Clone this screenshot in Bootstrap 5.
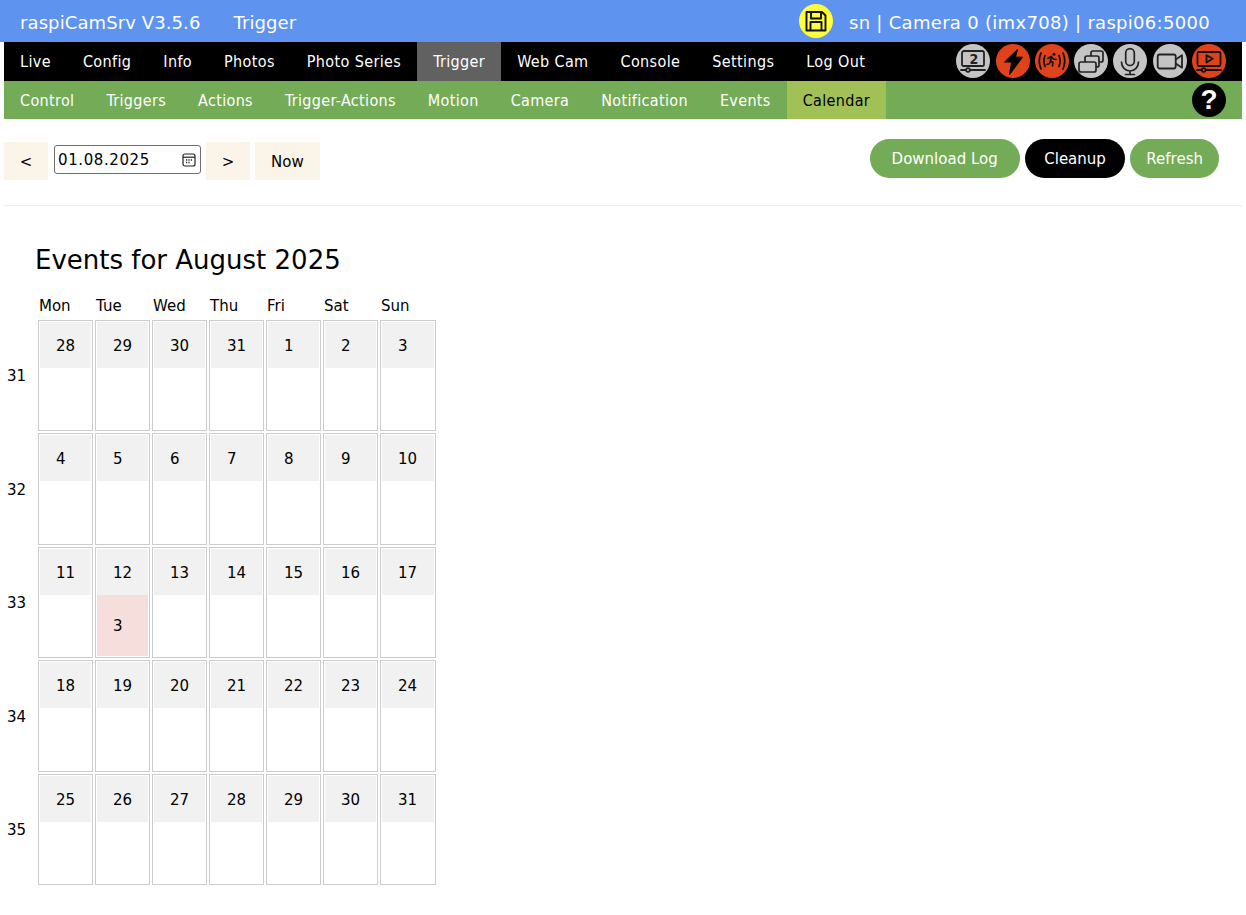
<!DOCTYPE html>
<html lang="en">
<head>
<meta charset="utf-8">
<title>raspiCamSrv</title>
<link href="https://cdn.jsdelivr.net/npm/bootstrap@5.3.0/dist/css/bootstrap.min.css" rel="stylesheet">
<style>
body{font-family:"DejaVu Sans",Verdana,sans-serif;font-size:15px;color:#000;background:#fff;line-height:1.5;}
.site-head{height:42px;background:#5e94ef;color:#fff;padding:2px 36px 0 20px;font-size:18px;letter-spacing:.1px;}
.site-head .page-name{margin-left:33px;}
.site-head .cam-info{letter-spacing:.3px;}
.round-ico{width:34px;height:34px;border-radius:50%;flex:none;display:block;}
.ico-save{background:#ffff3b;margin:-2px 16px 0 0;}
.ico-grey{background:#c4c4c4;}
.ico-red{background:#e0431c;}
.main-menu,.sub-menu{margin:0 4px;font-family:"DejaVu Sans Condensed","DejaVu Sans",sans-serif;font-stretch:condensed;}
.main-menu{background:#000;height:39px;padding-right:16px;}
.sub-menu{background:#74ab57;height:38px;padding-right:16px;}
.menu-item{display:block;padding:0 16px;color:#fff;text-decoration:none;height:100%;line-height:40px;font-size:16px;letter-spacing:.37px;}
.sub-menu .menu-item{letter-spacing:.34px;}
.main-menu .menu-item.on{background:#616161;}
.sub-menu .menu-item.on{background:#a1c055;color:#000;}
.ico-row{gap:5px;align-self:flex-start;margin-top:2px;}
.ico-row .round-ico:nth-child(1),.ico-row .round-ico:nth-child(5){margin-right:1px;}
.ico-help{background:#000;color:#fff;font:700 28px/34px "Liberation Sans",sans-serif;text-align:center;text-decoration:none;}
.tool-row{margin:0 4px;height:87px;border-bottom:1px solid #eee;padding-right:23px;}
.day-btn{background:#fbf5e9;color:#000;border:0;height:38px;padding:2px 16px 0;font-size:15px;font-family:inherit;margin-top:23px;}
.day-btn.step{padding:2px 15.5px 0;width:44px;}
.day-btn.now-btn{margin-left:5px;}
.day-input{width:147px;height:29px;margin:26px 5px 0 6px;border:1px solid #6e6e6e;border-radius:3px;padding:1px 4px 0 3px;font-size:15px;font-family:inherit;background:#fff;display:flex;align-items:center;justify-content:space-between;letter-spacing:.6px;}
.pill-btn{border:0;border-radius:20px;height:39px;color:#fff;background:#74ab57;font-size:15px;font-family:inherit;padding:1px 22px 0;margin-top:20px;margin-left:5px;}
.pill-btn.dark{background:#000;padding:1px 19.5px 0;}
.pill-btn.thin{padding:1px 16px 0;}
.cal-title{font-size:26px;font-weight:400;margin:35px 0 0 35px;line-height:38px;}
.week-grid{display:grid;grid-template-columns:38px repeat(7,57px);width:max-content;margin-top:17px;grid-template-rows:22px repeat(5,111.4px);row-gap:2px;}
.dow{padding-left:1px;line-height:20px;}
.wk{padding:2px 0 0 7px;align-self:center;}
.cell{width:55px;border:1px solid #ccc;padding:1px;display:flex;flex-direction:column;}
.cell:nth-child(8n){width:56px;}
.cell-day{height:46px;background:#f1f1f1;padding-left:16px;line-height:48px;}
.cell-ev{flex:1;padding:2px 0 0 16px;display:flex;align-items:center;}
.cell-ev.hit{background:#f5dedb;}
svg{display:block;}
</style>
</head>
<body>
<header class="site-head d-flex align-items-center">
  <span>raspiCamSrv V3.5.6</span><span class="page-name">Trigger</span>
  <span class="ms-auto round-ico ico-save d-flex align-items-center justify-content-center">
    <svg width="22" height="22" viewBox="0 0 22 22" fill="none" stroke="#111" stroke-width="1.9" stroke-linejoin="round"><path d="M1.5 2h15.5l3.5 3.5V20.500H1.500z"/><path d="M6 2.500v6h10v-6"/><path d="M5.500 20v-8h11v8"/></svg>
  </span>
  <span class="cam-info">sn | Camera 0 (imx708) | raspi06:5000</span>
</header>
<nav class="main-menu d-flex align-items-center">
  <a class="menu-item" href="#">Live</a><a class="menu-item" href="#">Config</a><a class="menu-item" href="#">Info</a><a class="menu-item" href="#">Photos</a><a class="menu-item" href="#">Photo Series</a><a class="menu-item on" href="#">Trigger</a><a class="menu-item" href="#">Web Cam</a><a class="menu-item" href="#">Console</a><a class="menu-item" href="#">Settings</a><a class="menu-item" href="#">Log Out</a>
  <div class="ms-auto d-flex ico-row">
    <span class="round-ico ico-grey"><svg width="34" height="34" viewBox="0 0 34 34" fill="none" stroke="#222" stroke-width="1.800" stroke-linecap="round"><path d="M8 22H7.500A1.500 1.500 0 0 1 6 20.500V9a2 2 0 0 1 2-2h18a2 2 0 0 1 2 2v11.500a1.500 1.500 0 0 1-1.500 1.500H8"/><text x="18" y="19.800" text-anchor="middle" font-family="DejaVu Sans,sans-serif" font-weight="700" font-size="14" fill="#222" stroke="none">2</text><path d="M5 26h24"/><circle cx="12" cy="26" r="1.900" fill="#c4c4c4"/></svg></span>
    <span class="round-ico ico-red"><svg width="34" height="34" viewBox="0 0 34 34" fill="#000" stroke="#000" stroke-width="1" stroke-linejoin="round"><path d="M21.500 5.500 8.500 18H15.700L13.300 31 26.500 13.200H19.500z"/></svg></span>
    <span class="round-ico ico-red"><svg width="34" height="34" viewBox="0 0 34 34" fill="none" stroke="#111" stroke-width="1.800" stroke-linecap="round" stroke-linejoin="round"><path d="M10 11.500Q7.800 17 10 22.500M6 9Q2.500 17 6 25M24 11.500Q26.200 17 24 22.500M28 9Q31.500 17 28 25"/><circle cx="19" cy="10.300" r="1.500" fill="#111" stroke="none"/><path d="M13 14.500 16 12.500 18.500 15 21 15.500M16.500 12.500 15.500 17 18 18.500 17.500 22M15.500 17 14.500 19.500 12 20.500" stroke-width="1.600"/></svg></span>
    <span class="round-ico ico-grey"><svg width="34" height="34" viewBox="0 0 34 34" fill="none" stroke="#222" stroke-width="1.700" stroke-linecap="round"><path d="M17 11.500V9a2 2 0 0 1 2-2h8a2 2 0 0 1 2 2v7a2 2 0 0 1-2 2h-1.500"/><path d="M11 17.500V14a2 2 0 0 1 2-2h10a2 2 0 0 1 2 2v7a2 2 0 0 1-2 2h-.5"/><rect x="5" y="18" width="17" height="10" rx="2"/></svg></span>
    <span class="round-ico ico-grey"><svg width="34" height="34" viewBox="0 0 34 34" fill="none" stroke="#222" stroke-width="1.700" stroke-linecap="round"><rect x="12.700" y="4.700" width="8.600" height="16.800" rx="4.300"/><path d="M8.500 18a8.500 9 0 0 0 17 0M17 27v3.500M12.500 30.500h9"/></svg></span>
    <span class="round-ico ico-grey"><svg width="34" height="34" viewBox="0 0 34 34" fill="none" stroke="#222" stroke-width="1.800" stroke-linejoin="round"><rect x="4.700" y="10.500" width="18" height="14" rx="2"/><path d="M22.700 15.500 29 11.300V23.700L22.700 19.500"/></svg></span>
    <span class="round-ico ico-red"><svg width="34" height="34" viewBox="0 0 34 34" fill="none" stroke="#111" stroke-width="1.800" stroke-linejoin="round" stroke-linecap="round"><path d="M8 22H7A1.500 1.500 0 0 1 5.500 20.500V9.500A1.500 1.500 0 0 1 7 8h20a1.500 1.500 0 0 1 1.500 1.500v11A1.500 1.500 0 0 1 27 22H8"/><path d="M14.500 11.200 20.800 14.800 14.500 18.500z"/><path d="M5 26h24"/><circle cx="11.700" cy="26" r="1.900" fill="#e0431c"/></svg></span>
  </div>
</nav>
<nav class="sub-menu d-flex align-items-center">
  <a class="menu-item" href="#">Control</a><a class="menu-item" href="#">Triggers</a><a class="menu-item" href="#">Actions</a><a class="menu-item" href="#">Trigger-Actions</a><a class="menu-item" href="#">Motion</a><a class="menu-item" href="#">Camera</a><a class="menu-item" href="#">Notification</a><a class="menu-item" href="#">Events</a><a class="menu-item on" href="#">Calendar</a>
  <a class="ms-auto round-ico ico-help" href="#">?</a>
</nav>
<section class="tool-row d-flex align-items-start">
  <button class="day-btn step">&lt;</button>
  <div class="day-input"><span>01.08.2025</span>
    <svg width="14" height="14" viewBox="0 0 14 14" fill="none" stroke="#222" stroke-width="1.200"><rect x="1" y="1" width="12" height="12" rx="2"/><path d="M1 4.200h12"/><path d="M4 7h1.200M6.400 7h1.200M8.800 7H10M4 9.500h1.200M6.400 9.500h1.200" stroke-width="1.300"/></svg>
  </div>
  <button class="day-btn step">&gt;</button>
  <button class="day-btn now-btn">Now</button>
  <button class="pill-btn ms-auto">Download Log</button>
  <button class="pill-btn dark">Cleanup</button>
  <button class="pill-btn thin">Refresh</button>
</section>
<h1 class="cal-title">Events for August 2025</h1>
<section class="week-grid" id="g"></section>
<script>
var days=[[28,29,30,31,1,2,3],[4,5,6,7,8,9,10],[11,12,13,14,15,16,17],[18,19,20,21,22,23,24],[25,26,27,28,29,30,31]];
var h='<div></div>';
['Mon','Tue','Wed','Thu','Fri','Sat','Sun'].forEach(function(d){h+='<div class="dow">'+d+'</div>';});
days.forEach(function(w,i){
  h+='<div class="wk">'+(31+i)+'</div>';
  w.forEach(function(d,j){
    var hit=(i==2&&j==1);
    h+='<div class="cell"><div class="cell-day">'+d+'</div><div class="cell-ev'+(hit?' hit':'')+'">'+(hit?'3':'')+'</div></div>';
  });
});
document.getElementById('g').innerHTML=h;
</script>
<script src="https://cdn.jsdelivr.net/npm/bootstrap@5.3.0/dist/js/bootstrap.bundle.min.js"></script>
</body>
</html>
